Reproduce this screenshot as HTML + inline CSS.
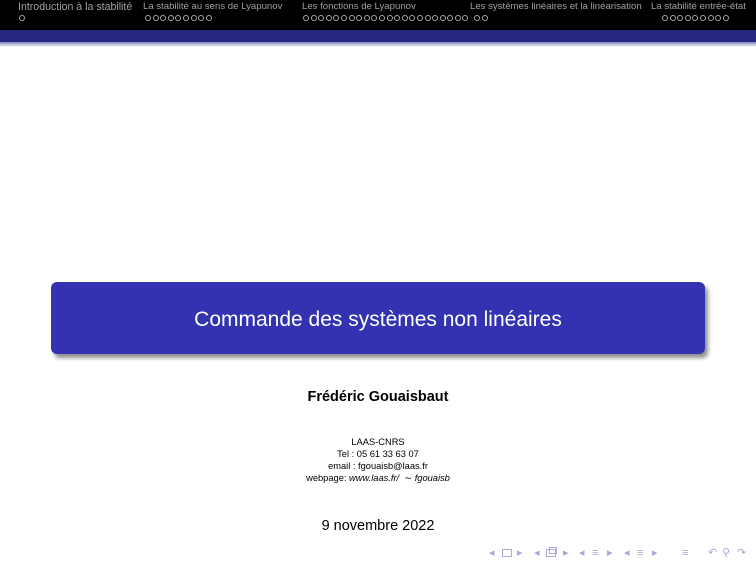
<!DOCTYPE html>
<html><head><meta charset="utf-8"><style>
body{margin:0;width:756px;height:567px;position:relative;background:#fff;font-family:"Liberation Sans","DejaVu Sans",sans-serif;overflow:hidden}
.hdr{position:absolute;left:0;top:0;width:756px;height:30px;background:#000}
.bar{position:absolute;left:0;top:30px;width:756px;height:12px;background:#27277f}
.fade{position:absolute;left:0;top:42px;width:756px;height:5px;background:linear-gradient(#7f7fc0,#fff)}
.s{position:absolute;top:1px;font-size:9.6px;color:#a0a0a0;white-space:nowrap}
.d{position:absolute;top:15px;height:7px;white-space:nowrap;font-size:0}
.d i{display:inline-block;width:4px;height:4px;border:1px solid #a8a8a8;border-radius:50%;margin-right:1.6px}
.d b{display:inline-block;width:4px}
.box{position:absolute;left:51px;top:282px;width:654px;height:72px;background:#3333b2;border-radius:6px;box-shadow:3px 4px 4px rgba(0,0,0,.45);color:#fff;font-size:21px;text-align:center;line-height:76px}
.c{position:absolute;left:0;width:756px;text-align:center;color:#000}
.n{position:absolute;top:546px;font-size:11px;color:#a8a8d8;line-height:14px}
.sq{position:absolute;top:549px;width:8px;height:6px;border:1.3px solid #a8a8d8}
</style></head><body>
<div class="hdr"></div><div class="bar"></div><div class="fade"></div>
<div class="s" style="left:18px;font-size:10.6px">Introduction à la stabilité</div>
<div class="s" style="left:143px">La stabilité au sens de Lyapunov</div>
<div class="s" style="left:302px">Les fonctions de Lyapunov</div>
<div class="s" style="left:470px">Les systèmes linéaires et la linéarisation</div>
<div class="s" style="left:651px">La stabilité entrée-état</div>
<div class="d" style="left:19px"><i></i></div>
<div class="d" style="left:145px"><i></i><i></i><i></i><i></i><i></i><i></i><i></i><i></i><i></i></div>
<div class="d" style="left:303px"><i></i><i></i><i></i><i></i><i></i><i></i><i></i><i></i><i></i><i></i><i></i><i></i><i></i><i></i><i></i><i></i><i></i><i></i><i></i><i></i><i></i><i></i><b></b><i></i><i></i></div>
<div class="d" style="left:662px"><i></i><i></i><i></i><i></i><i></i><i></i><i></i><i></i><i></i></div>
<div class="box">Commande des systèmes non linéaires</div>
<div class="c" style="top:389px;font-size:14.5px;font-weight:bold">Frédéric Gouaisbaut</div>
<div class="c" style="top:436px;font-size:9.3px;line-height:12px">LAAS-CNRS<br>Tel : 05 61 33 63 07<br>email : fgouaisb@laas.fr<br>webpage: <i>www.laas.fr/</i> &nbsp;∼ <i>fgouaisb</i></div>
<div class="c" style="top:518px;font-size:14.5px">9 novembre 2022</div>
<span class="n" style="left:489px">◂</span><span class="sq" style="left:502px"></span><span class="n" style="left:517px">▸</span>
<span class="n" style="left:534px">◂</span><span class="sq" style="left:546px"></span><span class="sq" style="left:549px;top:547px;width:6px;height:5px"></span><span class="n" style="left:563px">▸</span>
<span class="n" style="left:579px">◂</span><span class="n" style="left:592px">≡</span><span class="n" style="left:607px">▸</span>
<span class="n" style="left:624px">◂</span><span class="n" style="left:637px">≡</span><span class="n" style="left:652px">▸</span>
<span class="n" style="left:682px">≡</span>
<span class="n" style="left:708px">↶</span><span class="n" style="left:722px">⚲</span><span class="n" style="left:737px">↷</span>
</body></html>
